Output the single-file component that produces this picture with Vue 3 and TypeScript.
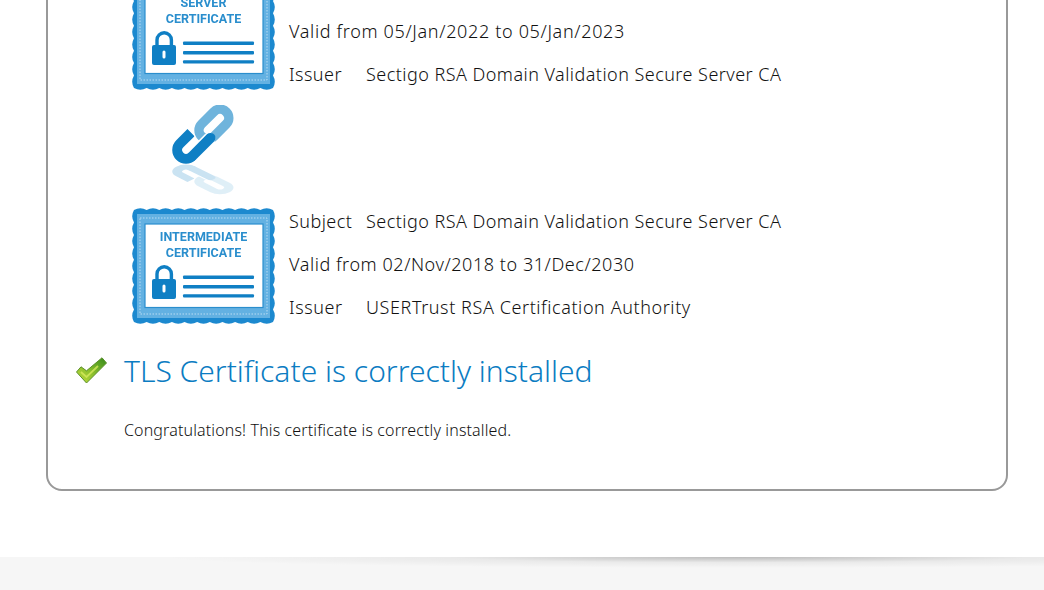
<script setup lang="ts">
interface Row { key?: string; value: string; track: number }
interface Cert { title: string; rows: Row[] }

const certs: Cert[] = [
  {
    title: 'SERVER',
    rows: [
      { value: '', track: 0 },
      { value: 'Valid from 05/Jan/2022 to 05/Jan/2023', track: 0.66 },
      { key: 'Issuer', value: 'Sectigo RSA Domain Validation Secure Server CA', track: 0.46 },
    ],
  },
  {
    title: 'INTERMEDIATE',
    rows: [
      { key: 'Subject', value: 'Sectigo RSA Domain Validation Secure Server CA', track: 0.46 },
      { value: 'Valid from 02/Nov/2018 to 31/Dec/2030', track: 0.56 },
      { key: 'Issuer', value: 'USERTrust RSA Certification Authority', track: 0.58 },
    ],
  },
]

// Scalloped outline of the certificate badge
function scallop(w: number, h: number, nx: number, ny: number, inset: number): string {
  const dx = (w - inset * 2) / nx
  const dy = (h - inset * 2) / ny
  const bump = 3.6
  let d = `M${inset} ${inset}`
  for (let i = 0; i < nx; i++) d += ` q${dx / 2} ${-bump} ${dx} 0`
  for (let i = 0; i < ny; i++) d += ` q${bump} ${dy / 2} 0 ${dy}`
  for (let i = 0; i < nx; i++) d += ` q${-dx / 2} ${bump} ${-dx} 0`
  for (let i = 0; i < ny; i++) d += ` q${-bump} ${-dy / 2} 0 ${-dy}`
  return d + ' Z'
}
const outline = scallop(143, 116, 11, 9, 2)
</script>

<template>
  <div class="page">
    <main class="main">
      <section class="card">
        <template v-for="(cert, i) in certs" :key="cert.title">
          <div v-if="i > 0" class="link-row">
            <svg class="link" width="62" height="90" viewBox="0 0 62 90">
              <g id="chain">
                <path d="M19 27.6 L7.8 38.8 A8.75 8.75 0 0 0 20.2 51.2" fill="none" stroke="#0f7fc4" stroke-width="10" />
                <rect x="-26" y="-8.75" width="34.75" height="17.5" rx="8.75" transform="translate(48 13) rotate(-45)" fill="none" stroke="#fff" stroke-width="12" />
                <rect x="-26" y="-8.75" width="34.75" height="17.5" rx="8.75" transform="translate(48 13) rotate(-45)" fill="none" stroke="#6fb4dc" stroke-width="9.5" />
                <path d="M26 45 L37 34" fill="none" stroke="#fff" stroke-width="12.5" stroke-linecap="round" />
                <path d="M20.2 51.2 L38.5 32.9" fill="none" stroke="#0f7fc4" stroke-width="10" stroke-linecap="round" />
              </g>
              <use href="#chain" transform="translate(0 89) scale(1 -0.5)" opacity="0.22" />
            </svg>
          </div>
          <div class="cert-group">
            <svg class="badge" width="143" height="116" viewBox="0 0 143 116">
              <path :d="outline" fill="#1c89cf" />
              <rect x="5" y="6" width="133" height="104" fill="#63b1e2" />
              <rect x="8" y="10" width="127" height="96" fill="none" stroke="#b9dcf3" stroke-width="1" stroke-dasharray="1.5 1.5" />
              <rect x="13" y="16" width="118" height="83.5" fill="#fff" stroke="#2a8ecd" stroke-width="1.2" />
              <text class="badge-text" x="71.5" y="33.4">{{ cert.title }}</text>
              <text class="badge-text" x="71.5" y="49.4">CERTIFICATE</text>
              <path d="M25 72 V66 A7.2 7.2 0 0 1 39.4 66 V72" fill="none" stroke="#0f7fc4" stroke-width="3.4" />
              <rect x="20" y="71" width="24" height="20" rx="2" fill="#0f7fc4" />
              <rect x="30.5" y="76.5" width="3" height="8" rx="1.5" fill="#fff" />
              <rect x="51" y="67.5" width="71" height="3.4" rx="1" fill="#0f7fc4" />
              <rect x="51" y="77" width="71" height="3.4" rx="1" fill="#0f7fc4" />
              <rect x="51" y="86.2" width="71" height="3.4" rx="1" fill="#0f7fc4" />
            </svg>
            <div class="rows">
              <div v-for="(row, r) in cert.rows" :key="r" class="row" :style="{ letterSpacing: row.track + 'px' }">
                <span v-if="row.key" class="key">{{ row.key }}</span>
                <span>{{ row.value }}</span>
              </div>
            </div>
          </div>
        </template>

        <div class="status">
          <svg width="31" height="27" viewBox="0 0 31 27" class="check">
            <defs>
              <linearGradient id="tick" x1="0" y1="1" x2="1" y2="0">
                <stop offset="0" stop-color="#c3df3e" />
                <stop offset="0.5" stop-color="#86bc2a" />
                <stop offset="1" stop-color="#348a1c" />
              </linearGradient>
            </defs>
            <path d="M0.5 15 L5 9.8 L10.5 13.8 L26 0.8 L30.5 6 L10.5 26 Z" fill="url(#tick)" stroke="#5b8f2a" stroke-width="1" stroke-linejoin="round" />
            <path d="M5 15 L10.5 20 L22 9" fill="none" stroke="#d6ea5c" stroke-width="1.8" opacity="0.8" />
          </svg>
          <h2 class="status-title">TLS Certificate is correctly installed</h2>
        </div>
        <p class="status-text">Congratulations! This certificate is correctly installed.</p>
      </section>
    </main>
    <footer class="footer"></footer>
  </div>
</template>

<style>
html, body { margin: 0; background: #fff; overflow: hidden; }
</style>

<style scoped>
.page {
  height: 590px;
  width: 1044px;
  overflow: hidden;
  display: flex;
  flex-direction: column;
  font-family: "Noto Sans", "Open Sans", sans-serif;
  font-weight: 300;
  color: #111;
}
.main {
  flex: 1;
  min-height: 0;
  display: flex;
  flex-direction: column;
  justify-content: flex-end;
  padding: 0 36px 66px 46px;
}
.card {
  flex: none;
  border: 2px solid #999;
  border-radius: 16px;
  padding: 0 28px 49px 28px;
  background: #fff;
}
.cert-group {
  display: flex;
  margin-left: 56px;
  align-items: center;
}
.badge {
  display: block;
  flex: none;
  margin: 3px 14px 0 0;
  filter: blur(0.35px);
}
.link {
  display: block;
  filter: blur(0.3px);
}
.check {
  flex: none;
  filter: blur(0.3px);
}
.badge-text {
  font-family: Roboto, sans-serif;
  font-weight: 700;
  font-size: 12.5px;
  fill: #2a8ecd;
  text-anchor: middle;
}
.rows { font-size: 18px; }
.row {
  display: flex;
  height: 43.33px;
  align-items: center;
  white-space: nowrap;
}
.key { width: 77px; flex: none; }
.link-row {
  height: 103.3px;
  padding: 9px 0 0 96px;
  box-sizing: border-box;
}
.status {
  display: flex;
  align-items: center;
  gap: 17px;
  height: 40px;
  margin-top: 21px;
}
.status-title {
  margin: 0;
  font-size: 30px;
  font-weight: 300;
  color: #0b7cc2;
  white-space: nowrap;
}
.status-text {
  margin: 30px 0 0 48px;
  font-size: 16px;
  line-height: 20px;
  letter-spacing: 0.14px;
  color: #111;
}
.footer {
  flex: none;
  height: 33px;
  background:
    radial-gradient(ellipse 580px 11px at 740px 0, rgba(0, 0, 0, 0.24), rgba(0, 0, 0, 0.05) 50%, rgba(0, 0, 0, 0) 100%),
    #f6f6f6;
}
</style>
